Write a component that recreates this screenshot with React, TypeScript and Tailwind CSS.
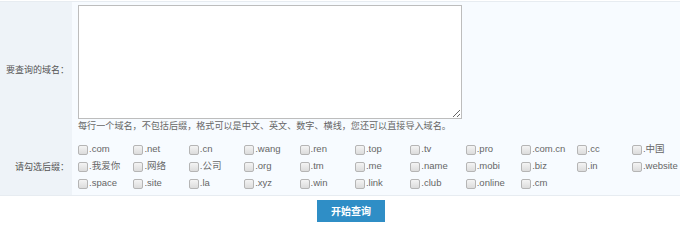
const suffixes = [
  '.com', '.net', '.cn', '.wang', '.ren', '.top', '.tv', '.pro', '.com.cn', '.cc', '.中国',
  '.我爱你', '.网络', '.公司', '.org', '.tm', '.me', '.name', '.mobi', '.biz', '.in', '.website',
  '.space', '.site', '.la', '.xyz', '.win', '.link', '.club', '.online', '.cm'
]

function SuffixItem({ name }: { name: string }) {
  return (
    <label className="flex h-[17px] items-center gap-[1px] whitespace-nowrap">
      <span className="h-[10px] w-[10px] shrink-0 rounded-[2px] border border-[#b5b5b5] bg-gradient-to-b from-[#f4f4f4] to-[#dcdcdc]"></span>
      <span>{name}</span>
    </label>
  )
}

export default function App() {
  return (
    <div className="h-[224px] w-[680px] bg-white pt-[1px] font-['Liberation_Sans','Noto_Sans_CJK_SC',sans-serif] text-[9px] text-[#555]">
      <div className="flex border-y border-[#e7ecf1]">
        <div className="flex w-[72px] shrink-0 flex-col bg-[#eef3f8] text-[#555]">
          <div className="flex h-[138px] items-center justify-end pr-[3px]">
            要查询的域名：
          </div>
          <div className="flex flex-1 items-center justify-end pr-[3px]">
            请勾选后缀：
          </div>
        </div>

        <div className="flex-1 bg-[#f7fbff] pt-[3px] pb-[3px] pl-[6px]">
          <textarea className="block h-[114px] w-[384px] border border-[#bdbdbd] bg-white"></textarea>
          <p className="text-[9.1px] leading-[15px] text-[#666]">
            每行一个域名，不包括后缀，格式可以是中文、英文、数字、横线，您还可以直接导入域名。
          </p>

          <div className="mt-[7px] grid grid-cols-[repeat(11,55.4px)] text-[9.5px] text-[#666]">
            {suffixes.map((s) => (
              <SuffixItem key={s} name={s} />
            ))}
          </div>
        </div>
      </div>

      <div className="mt-[4px] flex justify-center pl-[22px]">
        <button className="h-[22px] w-[68px] bg-[#2f8ec6] text-[10px] font-bold text-white">
          开始查询
        </button>
      </div>
    </div>
  )
}
